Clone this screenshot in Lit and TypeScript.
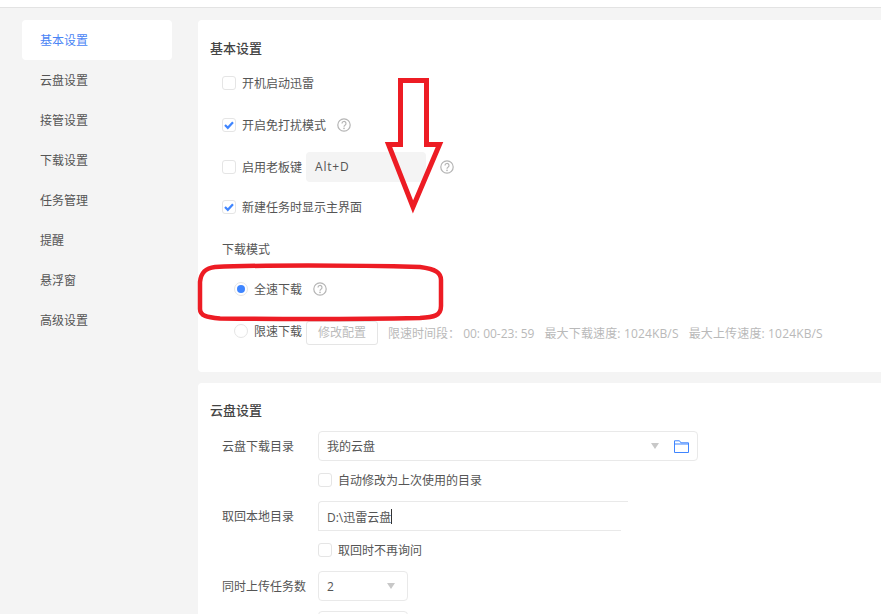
import { LitElement, html, css, svg } from "lit";
import { customElement } from "lit/decorators.js";

const nav = ["基本设置", "云盘设置", "接管设置", "下载设置", "任务管理", "提醒", "悬浮窗", "高级设置"];
const help = html`<svg class="help" width="14" height="14" viewBox="0 0 14 14"><circle cx="7" cy="7" r="6.2" fill="none" stroke="#b5b5b5" stroke-width="1.2"/><path d="M5 5.5a2 2 0 1 1 3 1.7c-.7.4-1 .8-1 1.500" fill="none" stroke="#b5b5b5" stroke-width="1.2"/><circle cx="7" cy="10.400" r=".8" fill="#b5b5b5"/></svg>`;
const check = (on: boolean) => html`<span class="cb">${on ? html`<svg width="12" height="12" viewBox="0 0 12 12"><path d="M2 6l2.800 2.800 5.200-5.600" fill="none" stroke="#3f85ff" stroke-width="2.200"/></svg>` : ""}</span>`;
const caret = html`<span class="caret"></span>`;

@customElement("app-root")
export class AppRoot extends LitElement {
  static styles = css`
    :host { display: block; width: 881px; height: 614px; overflow: hidden; position: relative; background: #f4f4f4; font-family: "Open Sans", "Noto Sans CJK SC", sans-serif; font-size: 12px; color: #555; }
    * { box-sizing: border-box; }
    .top { height: 8px; background: #fff; border-bottom: 1px solid #e3e3e3; }
    .main { display: flex; align-items: flex-start; padding: 12px 0 0 22px; }
    .side { width: 150px; flex: none; margin-right: 26px; }
    .nav { height: 40px; line-height: 38px; padding: 2px 0 0 18px; border-radius: 4px; }
    .nav.on { background: #fff; color: #4a84f5; }
    .content { flex: 1; min-width: 0; }
    .card { background: #fff; border-radius: 4px 0 0 4px; padding: 0 0 0 12px; }
    .c1 { height: 352px; margin-bottom: 11px; padding-top: 20px; }
    .c2 { height: 300px; padding-top: 19px; }
    h2 { margin: 0; font-size: 13px; font-weight: 500; line-height: 17px; color: #444; }
    .c2 h2 { margin-bottom: 12px; }
    .row { display: flex; align-items: center; padding-left: 12px; }
    .cb { width: 14px; height: 14px; flex: none; border: 1px solid #e5e5e5; border-radius: 3px; margin-right: 6px; display: flex; align-items: center; justify-content: center; background: #fff; }
    .help { margin-left: 11px; flex: none; }
    .r1 { margin-top: 14px; height: 24px; }
    .r2 { margin-top: 18px; height: 24px; }
    .r3 { margin-top: 15px; height: 30px; }
    .r4 { margin-top: 13px; height: 24px; }
    .key { width: 120px; height: 30px; background: #f4f4f4; border-radius: 4px; margin-left: 4px; padding-left: 9px; line-height: 30px; letter-spacing: .8px; }
    .key + .help { margin-left: 14px; }
    .mode { margin-top: 22px; padding-left: 12px; line-height: 17px; }
    .radio { width: 14px; height: 14px; border-radius: 50%; border: 1px solid #e5e5e5; display: flex; align-items: center; justify-content: center; margin-right: 6px; flex: none; }
    .dot { width: 8px; height: 8px; border-radius: 50%; background: #3f85ff; }
    .rd { padding-left: 24px; }
    .rd1 { margin-top: 19px; height: 24px; }
    .rd2 { margin-top: 18px; height: 24px; white-space: nowrap; }
    .btn { height: 24px; width: 72px; margin-left: 4px; border: 1px solid #e5e5e5; border-radius: 3px; color: #bbb; text-align: center; line-height: 22px; flex: none; position: relative; top: 2px; }
    .info { color: #b9b9b9; margin-left: 10px; position: relative; top: 2px; }
    .info span { margin-left: 10px; letter-spacing: .15px; }
    .info span + span { margin-left: 10px; }
    .field { display: flex; align-items: center; padding-left: 12px; height: 30px; }
    .lab { width: 96px; flex: none; }
    .box { height: 30px; border: 1px solid #e9e9e9; border-radius: 4px; padding: 0 8px; display: flex; align-items: center; color: #555; }
    .w380 { width: 380px; }
    .w90 { width: 90px; }
    .caret { width: 0; height: 0; border: 4px solid transparent; border-top: 6px solid #c8c8c8; border-bottom: 0; margin-left: auto; flex: none; }
    .folder { margin-left: 15px; flex: none; }
    .sub { display: flex; align-items: center; padding-left: 108px; height: 20px; margin: 9px 0 11px; }
    .text { width: 310px; border-right: 0; border-bottom: 0; border-radius: 4px 0 0 0; position: relative; }
    .text::after { content: ""; position: absolute; left: -1px; bottom: 0; width: 303px; height: 1px; background: #e9e9e9; }
    .caretline { display: inline-block; width: 1px; height: 15px; background: #333; }
    .gap { height: 10px; }
    .w90 .caret { margin-right: 4px; }
    .art { position: absolute; left: 0; top: 0; pointer-events: none; }
  `;

  render() {
    return html`
      <div class="top"></div>
      <div class="main">
        <div class="side">
          ${nav.map((n, i) => html`<div class="nav ${i === 0 ? "on" : ""}">${n}</div>`)}
        </div>
        <div class="content">
          <div class="card c1">
            <h2>基本设置</h2>
            <div class="row r1">${check(false)}开机启动迅雷</div>
            <div class="row r2">${check(true)}开启免打扰模式${help}</div>
            <div class="row r3">${check(false)}启用老板键<div class="key">Alt+D</div>${help}</div>
            <div class="row r4">${check(true)}新建任务时显示主界面</div>
            <div class="mode">下载模式</div>
            <div class="row rd rd1"><span class="radio"><span class="dot"></span></span>全速下载${help}</div>
            <div class="row rd rd2"><span class="radio"></span>限速下载<span class="btn">修改配置</span><span class="info">限速时间段： 00: 00-23: 59<span>最大下载速度: 1024KB/S</span><span>最大上传速度: 1024KB/S</span></span></div>
          </div>
          <div class="card c2">
            <h2>云盘设置</h2>
            <div class="field"><span class="lab">云盘下载目录</span><div class="box w380">我的云盘${caret}<svg class="folder" width="15" height="13" viewBox="0 0 15 13"><path d="M.5 12.500V.8h5l1.400 2h7.600v9.700zM.5 4h14" fill="none" stroke="#3f85ff"/></svg></div></div>
            <div class="sub">${check(false)}自动修改为上次使用的目录</div>
            <div class="field"><span class="lab">取回本地目录</span><div class="box text">D:\\迅雷云盘<i class="caretline"></i></div></div>
            <div class="sub">${check(false)}取回时不再询问</div>
            <div class="field"><span class="lab">同时上传任务数</span><div class="box w90">2${caret}</div></div>
            <div class="gap"></div>
            <div class="field"><span class="lab"></span><div class="box w90"></div></div>
          </div>
        </div>
      </div>
      <svg class="art" width="881" height="614" viewBox="0 0 881 614" fill="none" stroke="#ed1c24" stroke-width="5">
        ${svg`<path d="M400.500 80.500h26v64h13L413 207 388.500 144.500h12z" stroke-linejoin="miter"/>`}
        ${svg`<path d="M215 267C260 265 350 265 420 267C436 269 441 273 441 280V306C441 316 434 317 420 318C350 319.500 260 319 220 318.500C207 317 200 316 200 309V282C201 272 206 268 215 267Z" stroke-width="4.500"/>`}
      </svg>
    `;
  }
}
